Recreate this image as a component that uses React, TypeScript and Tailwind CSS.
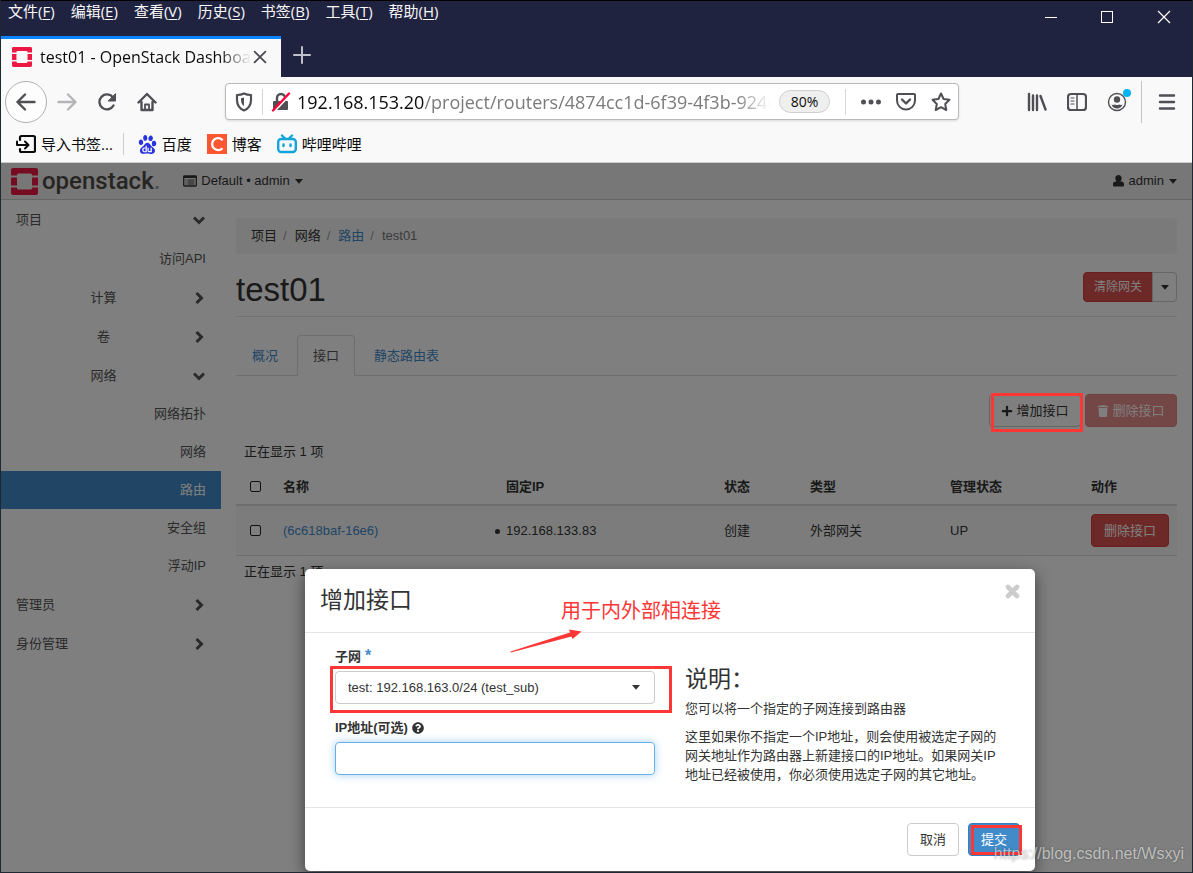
import type { ReactNode } from 'react';
import { FaPlus, FaQuestionCircle, FaTrash } from 'react-icons/fa';
import { SiBaidu } from 'react-icons/si';

const menus = [
  { t: '文件', k: 'F' },
  { t: '编辑', k: 'E' },
  { t: '查看', k: 'V' },
  { t: '历史', k: 'S' },
  { t: '书签', k: 'B' },
  { t: '工具', k: 'T' },
  { t: '帮助', k: 'H' },
];

function OpenStackMark({ className }: { className: string }) {
  return (
    <svg viewBox="0 0 27 27" className={className} fill="#ed1944" aria-hidden="true">
      <path d="M2 0h23a2 2 0 0 1 2 2v5.500h-6V7a1.500 1.500 0 0 0-1.500-1.500h-12A1.500 1.500 0 0 0 6 7v.5H0V2a2 2 0 0 1 2-2z" />
      <path d="M2 27h23a2 2 0 0 0 2-2v-5.500h-6v.5a1.500 1.500 0 0 1-1.500 1.500h-12A1.500 1.500 0 0 1 6 20v-.5H0V25a2 2 0 0 0 2 2z" />
      <path d="M0 9.500h6v8H0zM21 9.500h6v8h-6z" />
    </svg>
  );
}

function Icon({ children, className = 'size-5' }: { children: ReactNode; className?: string }) {
  return (
    <svg
      viewBox="0 0 20 20"
      className={className}
      fill="none"
      stroke="currentColor"
      strokeWidth="2"
      strokeLinecap="round"
      strokeLinejoin="round"
      aria-hidden="true"
    >
      {children}
    </svg>
  );
}

function Caret({ className = '' }: { className?: string }) {
  return (
    <svg viewBox="0 0 8 5" className={`h-[5px] w-2 ${className}`} fill="currentColor" aria-hidden="true">
      <path d="M0 0h8L4 4.800z" />
    </svg>
  );
}

function Chevron({ open }: { open: boolean }) {
  return (
    <svg viewBox="0 0 12 12" className="size-3" fill="none" stroke="currentColor" strokeWidth="3" aria-hidden="true">
      <path d={open ? 'M1 3.500l5 5 5-5' : 'M3.500 1l5 5-5 5'} />
    </svg>
  );
}

function TitleBar() {
  return (
    <header className="flex h-[77px] items-stretch justify-between border-t border-black bg-[#202340] text-[#f9f9fa]">
      <div className="flex flex-col justify-between">
        <nav className="flex gap-4 pl-[7px] text-[15px] leading-5">
          {menus.map((m) => (
            <button key={m.k} type="button">
              {m.t}(<span className="underline underline-offset-2">{m.k}</span>)
            </button>
          ))}
        </nav>
        <div className="flex items-center">
          <div className="flex h-[41px] w-[280px] items-center border-t-3 border-[#0a84ff] bg-[#f9f9fa] pr-3 pb-[2px] pl-[11px] text-[#0c0c0d]">
            <OpenStackMark className="size-5 shrink-0" />
            <span className="ml-2 flex-1 overflow-hidden text-[16px] leading-6 whitespace-nowrap [mask-image:linear-gradient(to_right,#000_85%,transparent)]">
              test01 - OpenStack Dashboar
            </span>
            <button type="button" aria-label="Close tab" className="text-[#4a4a4f]">
              <Icon className="size-[18px]">
                <path d="M4 4l12 12M16 4L4 16" />
              </Icon>
            </button>
          </div>
          <button type="button" aria-label="New tab" className="ml-[11px] pb-1 text-[#c0c1ca]">
            <Icon>
              <path d="M10 2v16M2 10h16" />
            </Icon>
          </button>
        </div>
      </div>
      <div className="flex h-8 items-center gap-11 pr-[21px]">
        <button type="button" aria-label="Minimize" className="w-3">
          <span className="block h-px bg-white" />
        </button>
        <button type="button" aria-label="Maximize" className="size-3 border border-white" />
        <button type="button" aria-label="Close">
          <svg viewBox="0 0 14 14" className="size-[14px]" stroke="#fff" strokeWidth="1.200" aria-hidden="true">
            <path d="M1 1l12 12M13 1L1 13" />
          </svg>
        </button>
      </div>
    </header>
  );
}

function Toolbar() {
  return (
    <div className="flex h-[49px] items-center bg-[#f9f9fa] pl-1 text-[#4f4f54]">
      <button type="button" aria-label="Back" className="flex size-[42px] items-center justify-center rounded-full border border-[#b1b1b3] bg-white/60">
        <Icon>
          <path d="M18.500 10H1.500M9 2.500L1.500 10 9 17.500" strokeWidth="2.400" />
        </Icon>
      </button>
      <button type="button" aria-label="Forward" className="flex w-10 justify-center text-[#b5b5b8]">
        <Icon>
          <path d="M1.500 10h17M11 2.500l7.500 7.500-7.500 7.500" strokeWidth="2.400" />
        </Icon>
      </button>
      <button type="button" aria-label="Reload" className="flex w-10 justify-center">
        <Icon>
          <path d="M16.500 13.500A7.500 7.500 0 1 1 16 5.500" strokeWidth="2.400" />
          <path d="M18.500 2v7h-7z" fill="currentColor" strokeWidth="1" />
        </Icon>
      </button>
      <button type="button" aria-label="Home" className="flex w-10 justify-center">
        <Icon>
          <path d="M1.500 10.500L10 2l8.500 8.500M4.500 10v8h11v-8" strokeWidth="2.400" />
          <path d="M8 18v-5.500h4V18" strokeWidth="1.800" />
        </Icon>
      </button>

      <div className="ml-[58px] flex h-[37px] min-w-0 flex-1 items-center rounded-sm border border-[#b9b9bb] bg-white pr-[7px] pl-2 shadow-sm">
        <Icon>
          <path d="M10 1.500c2 1 4.500 1.500 7 1.500v5c0 5-2.500 8.500-7 10.500C5.500 16.500 3 13 3 8V3c2.500 0 5-.5 7-1.500z" strokeWidth="2.200" />
          <path d="M10 5.500v8.500c-2-1.200-3-3.200-3-6V6.300z" fill="currentColor" stroke="none" />
        </Icon>
        <span className="ml-2 h-[26px] w-px bg-[#d7d7db]" />
        <Icon className="ml-2 size-5">
          <path d="M6 9V6a4 4 0 0 1 8 0v3" strokeWidth="2.400" />
          <rect x="2" y="9" width="15" height="9" rx="1" fill="currentColor" stroke="none" />
          <path d="M3 19L19 2" stroke="#fff" strokeWidth="3" strokeLinecap="butt" />
          <path d="M2 18.500L18 1.500" stroke="#ff0039" strokeWidth="2.400" />
        </Icon>
        <p className="ml-[6px] min-w-0 flex-1 overflow-hidden text-[18px] leading-6 whitespace-nowrap text-[#7b7b7d] [mask-image:linear-gradient(to_right,#000_93%,transparent)]">
          <span className="text-[#0c0c0d]">192.168.153.20</span>/project/routers/4874cc1d-6f39-4f3b-924c
        </p>
        <button type="button" className="ml-[9px] h-[23px] w-[51px] rounded-full border border-[#cfcfd1] bg-[#efeff0] text-[14px] leading-5 text-[#0c0c0d]">
          80%
        </button>
        <span className="ml-[15px] h-[26px] w-px bg-[#d7d7db]" />
        <div className="ml-[15px] flex items-center gap-[15px]">
          <button type="button" aria-label="Page actions">
            <Icon>
              <path d="M2.500 10h.01M10 10h.01M17.500 10h.01" strokeWidth="5" />
            </Icon>
          </button>
          <button type="button" aria-label="Save to Pocket">
            <Icon>
              <path d="M2 2h16a1 1 0 0 1 1 1v5.500a9 9 0 0 1-18 0V3a1 1 0 0 1 1-1z" strokeWidth="2" />
              <path d="M6 7.500l4 4 4-4" strokeWidth="2.400" />
            </Icon>
          </button>
          <button type="button" aria-label="Bookmark this page">
            <Icon>
              <path d="M10 1.500l2.600 5.500 5.900.8-4.300 4.200 1.100 6L10 15.200 4.700 18l1.100-6L1.500 7.800 7.400 7z" />
            </Icon>
          </button>
        </div>
      </div>

      <div className="ml-[58px] flex items-center">
        <button type="button" aria-label="Library" className="flex w-10 justify-center">
          <Icon>
            <path d="M2 2v16M6 3.500V18M10 3.500V18M13.500 4l5 13.500" strokeWidth="2.400" />
          </Icon>
        </button>
        <button type="button" aria-label="Sidebars" className="flex w-10 justify-center">
          <Icon>
            <rect x="1" y="2" width="18" height="16" rx="3" strokeWidth="2.200" />
            <path d="M10 2.500v15" strokeWidth="1.500" />
            <path d="M4 6h3M4 9h3M4 12h3" strokeWidth="1.200" />
          </Icon>
        </button>
        <button type="button" aria-label="Account" className="relative flex w-10 justify-center">
          <Icon>
            <circle cx="10" cy="10" r="8.500" strokeWidth="1.400" />
            <circle cx="10" cy="7.500" r="3.200" fill="currentColor" stroke="none" />
            <path d="M4.500 12.500c1 .8 2.500.3 3.500 0 1.200.8 2.800.8 4 0 1 .3 2.500.8 3.500 0-.8 2.500-2.900 4-5.500 4s-4.700-1.500-5.500-4z" fill="currentColor" stroke="none" />
          </Icon>
          <span className="absolute -top-[3px] right-[6px] size-2 rounded-full bg-[#00b3f4]" />
        </button>
        <span className="ml-1 h-[42px] w-px bg-[#c4c4c6]" />
        <button type="button" aria-label="Open menu" className="flex w-[50px] justify-center">
          <Icon>
            <path d="M3 3.500h14M3 10h14M3 16.500h14" strokeWidth="2.400" />
          </Icon>
        </button>
      </div>
    </div>
  );
}

function Bookmarks() {
  return (
    <nav className="flex h-[37px] items-center border-b border-[#cccccc] bg-[#f9f9fa] pl-[15px] text-[15px] leading-6 text-[#0c0c0d]">
      <a href="#" className="flex items-center gap-[5px]">
        <Icon>
          <path d="M4 6V3.500A1.500 1.500 0 0 1 5.500 2h12A1.500 1.500 0 0 1 19 3.500v13a1.500 1.500 0 0 1-1.500 1.500h-12A1.500 1.500 0 0 1 4 16.500V15" strokeWidth="2.200" />
          <path d="M1 7.500v3.500h11M9 7.500l3.500 3.500L9 14.500" />
        </Icon>
        导入书签...
      </a>
      <span className="mr-[14px] ml-[10px] h-[22px] w-px bg-[#cccccc]" />
      <a href="#" className="flex items-center gap-[5px]">
        <SiBaidu className="size-[19px] text-[#2932e1]" />
        百度
      </a>
      <a href="#" className="ml-[15px] flex items-center gap-[5px]">
        <svg viewBox="0 0 20 20" className="size-5" aria-hidden="true">
          <rect width="20" height="20" fill="#fc5531" />
          <path d="M15.500 14.200a6 6 0 1 1 .2-8" fill="none" stroke="#fff" strokeWidth="2.300" />
        </svg>
        博客
      </a>
      <a href="#" className="ml-[15px] flex items-center gap-[5px]">
        <svg viewBox="0 0 20 20" className="size-5" fill="none" stroke="#12a5dc" strokeWidth="2.400" strokeLinecap="round" aria-hidden="true">
          <rect x="1.200" y="5" width="17.600" height="13" rx="3" />
          <path d="M5 1.500l3 3M15 1.500l-3 3M6.500 10.500v1.500M13.500 10.500v1.500" />
        </svg>
        哔哩哔哩
      </a>
    </nav>
  );
}

function SideGroup({ label, open = false, nested = false }: { label: string; open?: boolean; nested?: boolean }) {
  return (
    <button type="button" aria-expanded={open} className="flex h-[39px] w-full items-center px-[15px]">
      <span className={nested ? 'flex-1 text-center' : 'flex-1 text-left'}>{label}</span>
      <span className="flex w-[15px] justify-center">
        <Chevron open={open} />
      </span>
    </button>
  );
}

function SideLink({ label, active = false }: { label: string; active?: boolean }) {
  return (
    <a
      href="#"
      className={
        active
          ? 'flex h-[38px] items-center justify-end bg-[#428bca] pr-[15px] text-white'
          : 'flex h-[38px] items-center justify-end pr-[15px]'
      }
    >
      {label}
    </a>
  );
}

function Sidebar() {
  return (
    <aside className="w-[220px] shrink-0 text-[#555555]">
      <SideGroup label="项目" open />
      <a href="#" className="flex h-[39px] items-center justify-end pr-[15px]">访问API</a>
      <SideGroup label="计算" nested />
      <SideGroup label="卷" nested />
      <SideGroup label="网络" nested open />
      <SideLink label="网络拓扑" />
      <SideLink label="网络" />
      <SideLink label="路由" active />
      <SideLink label="安全组" />
      <SideLink label="浮动IP" />
      <SideGroup label="管理员" />
      <SideGroup label="身份管理" />
    </aside>
  );
}

function CheckBox({ label }: { label: string }) {
  return (
    <input
      type="checkbox"
      aria-label={label}
      className="ml-[6px] block size-[11px] appearance-none rounded-xs border border-[#222222] bg-white"
    />
  );
}

function RouterDetail() {
  return (
    <main className="min-w-0 flex-1 px-[15px] pt-[18px] text-[#333333]">
      <ol className="flex h-9 items-center rounded bg-[#f5f5f5] px-[15px]">
        <li>项目</li>
        <li className="pl-[6px]"><span className="pr-2 text-[#999999]">/</span>网络</li>
        <li className="pl-[6px]"><span className="pr-2 text-[#999999]">/</span><a href="#" className="text-[#428bca]">路由</a></li>
        <li className="pl-[6px] text-[#777777]"><span className="pr-2 text-[#999999]">/</span>test01</li>
      </ol>

      <div className="mt-[18px] flex items-start justify-between border-b border-[#e7e7e7] pb-2">
        <h1 className="text-[33px] leading-9">test01</h1>
        <div className="flex h-[30px] text-[12px]">
          <button type="button" className="w-[70px] rounded-l border border-[#d43f3a] bg-[#d9534f] text-white">清除网关</button>
          <button type="button" aria-label="更多动作" className="-ml-px flex w-[25px] items-center justify-center rounded-r border border-[#cccccc] bg-white">
            <Caret />
          </button>
        </div>
      </div>

      <nav className="mt-[18px] flex gap-[3px] border-b border-[#dddddd] text-[#428bca]">
        <a href="#" className="-mb-px flex h-[41px] items-center px-4">概况</a>
        <a href="#" className="-mb-px flex h-[41px] items-center rounded-t border border-b-0 border-[#dddddd] bg-white px-[15px] text-[#555555]">接口</a>
        <a href="#" className="-mb-px flex h-[41px] items-center px-4">静态路由表</a>
      </nav>

      <div className="mt-[18px] flex justify-end gap-1">
        <div className="relative">
          <button type="button" className="flex h-[33px] w-[92px] items-center justify-center gap-[3px] rounded border border-[#cccccc] bg-white">
            <FaPlus className="size-3" />
            增加接口
          </button>
          <span className="pointer-events-none absolute -top-px -right-[2px] z-30 h-[39px] w-[92px] border-3 border-[#fd3735]" />
        </div>
        <button type="button" disabled className="flex h-[33px] w-[92px] items-center justify-center gap-[3px] rounded border border-[#d43f3a] bg-[#d9534f] text-white opacity-65">
          <FaTrash className="size-3" />
          删除接口
        </button>
      </div>

      <p className="mt-4 mb-2 pl-2">正在显示 1 项</p>
      <table className="w-full table-fixed border-separate border-spacing-0 text-left">
        <colgroup>
          <col className="w-[39px]" />
          <col className="w-[223px]" />
          <col className="w-[218px]" />
          <col className="w-[86px]" />
          <col className="w-[140px]" />
          <col className="w-[141px]" />
          <col className="w-[94px]" />
        </colgroup>
        <thead>
          <tr className="h-[37px]">
            <th className="border-b-2 border-[#dddddd] px-2"><CheckBox label="全选" /></th>
            {['名称', '固定IP', '状态', '类型', '管理状态', '动作'].map((h) => (
              <th key={h} className="border-b-2 border-[#dddddd] px-2 font-bold">{h}</th>
            ))}
          </tr>
        </thead>
        <tbody>
          <tr className="h-[50px] bg-[#f9f9f9] *:border-b *:border-[#dddddd] *:px-2">
            <td><CheckBox label="6c618baf-16e6" /></td>
            <td><a href="#" className="text-[#428bca]">(6c618baf-16e6)</a></td>
            <td>
              <ul>
                <li className="relative before:absolute before:top-[7px] before:-left-[11px] before:size-[5px] before:rounded-full before:bg-[#333333]">
                  192.168.133.83
                </li>
              </ul>
            </td>
            <td>创建</td>
            <td>外部网关</td>
            <td>UP</td>
            <td>
              <button type="button" className="block h-[33px] w-[78px] rounded border border-[#d43f3a] bg-[#d9534f] text-white">删除接口</button>
            </td>
          </tr>
        </tbody>
      </table>
      <p className="mt-[7px] pl-2">正在显示 1 项</p>
    </main>
  );
}

function AddInterfaceModal() {
  return (
    <div
      role="dialog"
      aria-label="增加接口"
      className="absolute top-[406px] left-[304px] z-20 w-[730px] rounded-[5px] bg-white text-[#333333] shadow-[0_5px_15px_rgba(0,0,0,0.5)]"
    >
      <div className="flex items-start justify-between border-b border-[#e5e5e5] px-[15px] pt-[13px] pb-[14px]">
        <h2 className="text-[23px] leading-9">增加接口</h2>
        <button type="button" aria-label="关闭" className="pt-[2px] text-[#cccccc]">
          <svg viewBox="0 0 15 15" className="size-[15px]" stroke="currentColor" strokeWidth="4.600" strokeLinecap="round" aria-hidden="true">
            <path d="M3 3l9 9M12 3l-9 9" />
          </svg>
        </button>
      </div>

      <div className="grid grid-cols-2 px-[15px] pt-[15px] pb-[23px]">
        <form className="px-[15px]">
          <label htmlFor="subnet" className="flex h-[23px] items-start font-bold">
            子网<span className="ml-1 text-[16px] leading-4 text-[#428bca]">*</span>
          </label>
          <div className="relative">
            <select id="subnet" className="block h-[33px] w-full appearance-none rounded border border-[#cccccc] bg-white pr-8 pl-3">
              <option>test: 192.168.163.0/24 (test_sub)</option>
            </select>
            <Caret className="pointer-events-none absolute top-[14px] right-[15px]" />
            <span className="pointer-events-none absolute -top-[5px] -right-[17px] -bottom-[9px] -left-[5px] border-3 border-[#fd3735]" />
          </div>
          <label htmlFor="ip" className="mt-[15px] flex h-[23px] items-start gap-1 font-bold">
            IP地址(可选)
            <FaQuestionCircle className="mt-[3px] size-3" />
          </label>
          <input id="ip" type="text" className="block h-[33px] w-full rounded border border-[#66afe9] px-3 shadow-[0_0_8px_rgba(102,175,233,0.6)] outline-none" />
        </form>
        <div className="px-[15px] pt-[13px]">
          <h3 className="mb-[3px] text-[23px] leading-9">说明：</h3>
          <p className="mb-[9px]">您可以将一个指定的子网连接到路由器</p>
          <p className="leading-[19px]">
            这里如果你不指定一个IP地址，则会使用被选定子网的网关地址作为路由器上新建接口的IP地址。如果网关IP地址已经被使用，你必须使用选定子网的其它地址。
          </p>
        </div>
      </div>

      <div className="flex justify-end gap-[9px] border-t border-[#e5e5e5] p-[15px]">
        <button type="button" className="h-[33px] w-[52px] rounded border border-[#cccccc] bg-white">取消</button>
        <div className="relative">
          <button type="submit" className="block h-[33px] w-[52px] rounded border border-[#357ebd] bg-[#428bca] text-white">提交</button>
          <span className="pointer-events-none absolute top-[2px] -right-[2px] bottom-px left-[3px] border-3 border-[#fd3735]" />
        </div>
      </div>

      {/* hand-drawn note over the dialog */}
      <p className="absolute top-[30px] left-[256px] text-[20px] leading-6 text-[#fd3735]">用于内外部相连接</p>
      <svg viewBox="0 0 72 24" className="absolute top-[60px] left-[205px] h-6 w-[72px]" fill="#fd3735" aria-hidden="true">
        <path d="M.5 22.500L60 3.500 59 .5 71.500 2.500 62.500 10 61.500 7.500.8 23.500z" />
      </svg>
    </div>
  );
}

export default function App() {
  return (
    <div className="flex min-h-screen flex-col border-x border-b border-[#1f2733] bg-white font-['Open_Sans','Noto_Sans_CJK_SC',sans-serif]">
      <TitleBar />
      <Toolbar />
      <Bookmarks />

      <div className="relative flex flex-1 flex-col overflow-hidden font-['Liberation_Sans','Noto_Sans_CJK_SC',sans-serif] text-[13px] leading-[18px]">
        <header className="flex h-[37px] shrink-0 items-center justify-between border-b border-[#cccccc] bg-[#eeeeee] pr-[15px] pl-[10px] text-[#333333]">
          <div className="flex items-center">
            <OpenStackMark className="size-[27px]" />
            <span className="ml-1 font-['Roboto',sans-serif] text-[24px] leading-8 font-medium text-[#4d4a45]">
              openstack<span className="text-[#999999]">.</span>
            </span>
            <button type="button" className="ml-[23px] flex items-center">
              <svg viewBox="0 0 14 12" className="mr-1 h-3 w-[14px]" fill="none" stroke="currentColor" aria-hidden="true">
                <rect x=".7" y="1" width="12.600" height="10" rx=".8" strokeWidth="1.300" />
                <path d="M1 2h12" strokeWidth="2" />
                <path d="M2.500 5h1M2.500 7h1M2.500 9h1M4.500 5h7M4.500 7h7M4.500 9h7" />
              </svg>
              Default • admin
              <Caret className="ml-[5px]" />
            </button>
          </div>
          <button type="button" className="flex items-center">
            <svg viewBox="0 0 11 12" className="mr-[5px] h-3 w-[11px]" fill="currentColor" aria-hidden="true">
              <path d="M5.500 0C7.500 0 8.700 1.300 8.700 3.200c0 1.400-.6 2.500-1.300 3.200h1.100c1.400 0 2.500 1 2.500 2.300v1.500c0 .8-.6 1.300-1.300 1.300H1.300C.6 11.500 0 11 0 10.200V8.700C0 7.400 1.100 6.400 2.500 6.400h1.100C2.900 5.700 2.300 4.600 2.300 3.200 2.300 1.300 3.500 0 5.500 0z" />
            </svg>
            admin
            <Caret className="ml-[5px]" />
          </button>
        </header>
        <div className="flex flex-1">
          <Sidebar />
          <RouterDetail />
        </div>

        <div className="absolute inset-0 z-10 bg-black/50" />
        <AddInterfaceModal />
        <p className="pointer-events-none absolute right-2 bottom-2 z-30 text-[16px] leading-5 text-white/60 [text-shadow:0_0_2px_rgba(0,0,0,0.4)]">
          https://blog.csdn.net/Wsxyi
        </p>
      </div>
    </div>
  );
}
